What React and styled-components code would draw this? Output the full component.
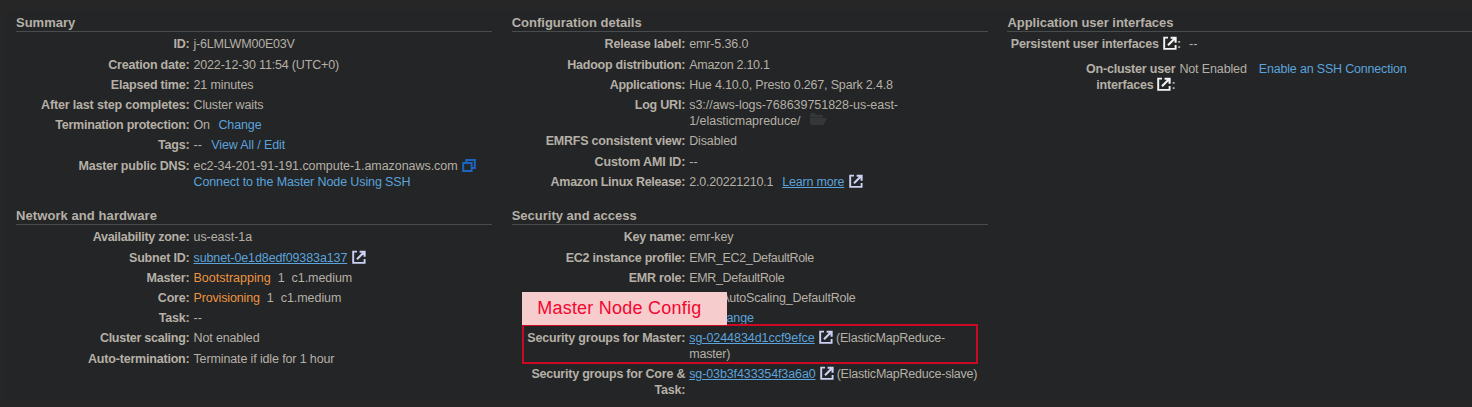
import React from 'react';
import styled, { createGlobalStyle } from 'styled-components';

const Global = createGlobalStyle`
  * { box-sizing: border-box; }
  body {
    margin: 0;
    background: #272626;
    color: #b6b0a7;
    font: 13px/16px "Liberation Sans", Arial, sans-serif;
  }
`;
const Page = styled.main`
  height: 407px;
  padding: 12px 0 5px 5px;
  overflow: hidden;
`;
const Panel = styled.div`
  height: 390px;
  padding: 0 0 0 11px;
  background: #232526;
  display: grid;
  grid-template-columns: 476px 476px 1fr;
  grid-template-rows: 193px 1fr;
  column-gap: 19.7px;
`;
const Section = styled.section`
  min-width: 0;
  position: relative;
`;
const Heading = styled.h2`
  margin: 0 0 4px;
  height: 20px;
  padding-top: 3px;
  border-bottom: 1px solid #494c4d;
  font-size: 13px;
  line-height: 16px;
  font-weight: bold;
  letter-spacing: ${p => p.$ls || 0}px;
  white-space: nowrap;
`;
const Row = styled.div`
  display: grid;
  grid-template-columns: ${p => p.$label || 173.5}px 1fr;
  column-gap: ${p => p.$between || 4}px;
  margin-top: ${p => p.$gap ?? 4}px;
  white-space: nowrap;
`;
const Label = styled.div`
  text-align: right;
  font-size: 12.5px;
  font-weight: bold;
  min-height: 16px;
  letter-spacing: ${p => p.$ls ?? -0.2}px;
`;
const Value = styled.div`
  font-size: 12.5px;
  letter-spacing: ${p => p.$ls ?? -0.13}px;
  padding-left: ${p => p.$indent || 0}px;
`;
const Link = styled.a`
  color: #5ba3dc;
  margin-left: ${p => p.$ml || 0}px;
  letter-spacing: ${p => p.$ls ?? -0.11}px;
  text-decoration: ${p => (p.$underline ? 'underline' : 'none')};
`;
const Status = styled.span`
  color: #ec9440;
  letter-spacing: ${p => p.$ls || 0}px;
`;
const Spaced = styled.span`
  margin-left: 7px;
  letter-spacing: -0.05px;
`;
const Icon = styled.svg`
  width: ${p => p.$w || 14}px;
  height: ${p => p.$h || 14}px;
  margin: 0 ${p => p.$mr || 0}px 0 ${p => p.$ml ?? 4.3}px;
  vertical-align: ${p => p.$drop ?? -2}px;
`;
const Outline = styled.div`
  position: absolute;
  left: 10px;
  top: 119px;
  width: 456px;
  height: 40px;
  border: 2px solid #cb0922;
`;
const Tag = styled.div`
  position: absolute;
  left: 10px;
  top: 87px;
  width: 205px;
  height: 33px;
  padding-left: 15.5px;
  background: #f6cccd;
  color: #f3062f;
  font-size: 18px;
  line-height: 32px;
  letter-spacing: 0.23px;
  white-space: nowrap;
`;

const External = ({ color = '#cdd2f5', ...rest }) => (
  <Icon viewBox="0 0 14 14" fill="none" stroke={color} strokeWidth="1.9" {...rest}>
    <path d="M5 1.6H1.2v11.3h11.4V9" />
    <path d="M7.6 1.7h5v5M12.2 2L5 9.2" strokeWidth="2.1" />
  </Icon>
);
const Copy = () => (
  <Icon viewBox="0 0 14 13" $w={14} $h={13} fill="none" stroke="#1b65be" strokeWidth="2">
    <path d="M1.2 4h8.4v7.9H1.2z" />
    <path d="M4.3 3.6V1.1h8.5v7.8H10" />
  </Icon>
);
const Folder = () => (
  <Icon viewBox="0 0 17 12" $w={17} $h={12} $ml={9.5} $drop={0} fill="#343637">
    <path d="M0 9.5V1.2C0 .5.5 0 1.2 0h3.6L6.4 1.8h5.3c.7 0 1.2.5 1.2 1.2v1.4H0z" />
    <path d="M4.2 5H17l-3 6.2c-.2.5-.7.8-1.2.8H.7L0 9.5V5z" />
  </Icon>
);

export default function App() {
  return (
    <>
      <Global />
      <Page>
        <Panel>
          <Section>
            <Heading>Summary</Heading>
            <Row><Label>ID:</Label><Value $ls={-0.2}>j-6LMLWM00E03V</Value></Row>
            <Row $gap={5}><Label>Creation date:</Label><Value $ls={-0.17}>2022-12-30 11:54 (UTC+0)</Value></Row>
            <Row><Label>Elapsed time:</Label><Value>21 minutes</Value></Row>
            <Row><Label $ls={-0.17}>After last step completes:</Label><Value>Cluster waits</Value></Row>
            <Row><Label $ls={-0.22}>Termination protection:</Label><Value>On<Link $ml={8.5}>Change</Link></Value></Row>
            <Row><Label>Tags:</Label><Value $ls={0.2}>--<Link $ml={9}>View All / Edit</Link></Value></Row>
            <Row $gap={5}>
              <Label>Master public DNS:</Label>
              <Value $ls={-0.05}>ec2-34-201-91-191.compute-1.amazonaws.com<Copy /><br /><Link>Connect to the Master Node Using SSH</Link></Value>
            </Row>
          </Section>
          <Section>
            <Heading>Configuration details</Heading>
            <Row><Label>Release label:</Label><Value>emr-5.36.0</Value></Row>
            <Row $gap={5}><Label $ls={-0.25}>Hadoop distribution:</Label><Value $ls={-0.28}>Amazon 2.10.1</Value></Row>
            <Row><Label $ls={-0.28}>Applications:</Label><Value $ls={-0.17}>Hue 4.10.0, Presto 0.267, Spark 2.4.8</Value></Row>
            <Row><Label>Log URI:</Label><Value $ls={-0.03}>s3://aws-logs-768639751828-us-east-<br />1/elasticmapreduce/<Folder /></Value></Row>
            <Row><Label $ls={-0.23}>EMRFS consistent view:</Label><Value>Disabled</Value></Row>
            <Row $gap={5}><Label $ls={-0.14}>Custom AMI ID:</Label><Value $ls={0.2}>--</Value></Row>
            <Row><Label $ls={-0.27}>Amazon Linux Release:</Label><Value $ls={-0.2}>2.0.20221210.1<Link $underline $ml={9} $ls={-0.2}>Learn more</Link><External /></Value></Row>
          </Section>
          <Section>
            <Heading $ls={-0.03}>Application user interfaces</Heading>
            <Row $between={8}><Label $ls={-0.18}>Persistent user interfaces<External $ml={4} color="#f4f4f4" />:</Label><Value $ls={0.2}>--</Value></Row>
            <Row $gap={9} $label={168}>
              <Label>On-cluster user<br />interfaces<External $ml={4} color="#f4f4f4" />:</Label>
              <Value>Not Enabled<Link $ml={12} $ls={-0.18}>Enable an SSH Connection</Link></Value>
            </Row>
          </Section>
          <Section>
            <Heading $ls={0.08}>Network and hardware</Heading>
            <Row><Label $ls={-0.27}>Availability zone:</Label><Value $ls={-0.05}>us-east-1a</Value></Row>
            <Row $gap={5}><Label>Subnet ID:</Label><Value><Link $underline>subnet-0e1d8edf09383a137</Link><External /></Value></Row>
            <Row><Label>Master:</Label><Value><Status>Bootstrapping</Status><Spaced>1</Spaced><Spaced>c1.medium</Spaced></Value></Row>
            <Row><Label>Core:</Label><Value><Status $ls={-0.15}>Provisioning</Status><Spaced>1</Spaced><Spaced>c1.medium</Spaced></Value></Row>
            <Row><Label>Task:</Label><Value $ls={0.2}>--</Value></Row>
            <Row><Label $ls={-0.26}>Cluster scaling:</Label><Value>Not enabled</Value></Row>
            <Row $gap={5}><Label>Auto-termination:</Label><Value>Terminate if idle for 1 hour</Value></Row>
          </Section>
          <Section>
            <Heading>Security and access</Heading>
            <Row><Label>Key name:</Label><Value>emr-key</Value></Row>
            <Row $gap={5}><Label $ls={-0.23}>EC2 instance profile:</Label><Value $ls={-0.35}>EMR_EC2_DefaultRole</Value></Row>
            <Row><Label>EMR role:</Label><Value $ls={-0.33}>EMR_DefaultRole</Value></Row>
            <Row><Label /><Value $ls={-0.2} $indent={32}>AutoScaling_DefaultRole</Value></Row>
            <Row><Label /><Value $indent={21.5}><Link>Change</Link></Value></Row>
            <Row><Label>Security groups for Master:</Label><Value $ls={-0.19}><Link $underline $ls={-0.05}>sg-0244834d1ccf9efce</Link><External $mr={3} />(ElasticMapReduce-<br />master)</Value></Row>
            <Row><Label $ls={-0.23}>Security groups for Core &amp;<br />Task:</Label><Value $ls={-0.22}><Link $underline>sg-03b3f433354f3a6a0</Link><External $mr={2.8} />(ElasticMapReduce-slave)</Value></Row>
            <Outline />
            <Tag>Master Node Config</Tag>
          </Section>
        </Panel>
      </Page>
    </>
  );
}
